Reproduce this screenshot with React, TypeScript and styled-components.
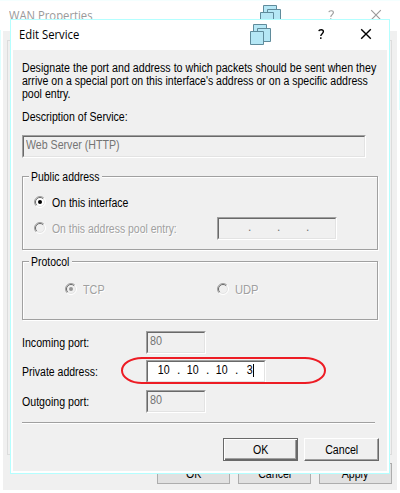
import React from "react";
import styled, { createGlobalStyle } from "styled-components";

const Global = createGlobalStyle`
  * { box-sizing: border-box; }
  body { margin: 0; background: #fff; overflow: hidden; }
`;

const face = "#f0f0f0";

const Desktop = styled.div`
  display: grid;
  width: 400px;
  height: 493px;
  background: linear-gradient(#dff, #dff) 0 30px / 1px 50px no-repeat,
    linear-gradient(#dff, #dff) 399px 80px / 1px 30px no-repeat, #fff;
  font: 12px/13px "Liberation Sans", Arial, sans-serif;
  color: #000;
`;

/* Condensed run of text, narrowed toward its own origin. */
const Narrow = styled.span<{ $x?: number; $origin?: string }>`
  display: inline-block;
  transform: scaleX(${(p) => p.$x ?? 0.885});
  transform-origin: ${(p) => p.$origin ?? "left"} center;
  white-space: nowrap;
`;

const ParentWindow = styled.section`
  grid-area: 1 / 1;
  display: flex;
  flex-direction: column;
  padding: 0 3px 3px;
  border-bottom: 1px solid #e3ffff;
  border-top: 1px solid #f4ffff;
`;

const ParentBody = styled.div`
  height: 459px;
  padding: 9px 5px 0 4px;
  background: ${face};
`;

const TabPane = styled.div`
  height: 415px;
  border: 1px solid #dcdcdc;
  margin-bottom: 8px;
`;

const ButtonRow = styled.div<{ $gap: number }>`
  display: flex;
  justify-content: flex-end;
  gap: ${(p) => p.$gap}px;
`;

const FlatButton = styled.button`
  width: 73px;
  height: 21px;
  padding: 0;
  border: 1px solid #adadad;
  background: #e1e1e1;
  color: #000;
  font: inherit;
  line-height: 20px;
`;

const Dialog = styled.section`
  grid-area: 1 / 1;
  position: relative;
  margin: 19px 0 0 10px;
  width: 380px;
  height: 455px;
  padding: 0 2px 2px;
  border: 1px solid #b4ffff;
  background: #fff;
`;

const TitleBar = styled.header<{ $inactive?: boolean }>`
  display: flex;
  height: 30px;
  padding-left: 6px;
  color: ${(p) => (p.$inactive ? "#999" : "#000")};
  font: 12px/30px "Open Sans", "Noto Sans", sans-serif;
`;

const TitleText = styled.div<{ $w: number }>`
  width: ${(p) => p.$w}px;
  height: 30px;
`;

const Glyph = styled.svg`
  display: block;
  flex: none;
`;

const DialogBody = styled.div`
  height: 421px;
  padding: 12px 8px 0 9px;
  background: ${face};
`;

const Intro = styled.p`
  width: 356px;
  height: 39px;
  margin: 0 0 10px;
`;

const Line = styled(Narrow)`
  display: block;
  width: max-content;
`;

const Caption = styled.div`
  height: 24px;
`;

const Field = styled.div<{ $w: number; $white?: boolean }>`
  flex: none;
  width: ${(p) => p.$w}px;
  height: 23px;
  border: 1px solid;
  border-color: #a0a0a0 #fff #fff #a0a0a0;
  background: ${(p) => (p.$white ? "#fff" : face)};
  color: ${(p) => (p.$white ? "#000" : "#747474")};
`;

const FieldInner = styled.div`
  display: flex;
  height: 21px;
  padding: 2px 2px 0;
  border: 1px solid;
  border-color: #696969 #e3e3e3 #e3e3e3 #696969;
`;

const Octet = styled.span<{ $w: number; $end?: boolean }>`
  display: flex;
  flex: none;
  justify-content: ${(p) => (p.$end ? "flex-end" : "center")};
  width: ${(p) => p.$w}px;
`;

const Dot = styled.span`
  flex: none;
  width: 3px;
`;

const Caret = styled.i`
  flex: none;
  width: 1px;
  height: 13px;
  background: #000;
`;

const Group = styled.fieldset<{ $h: number; $gap: number }>`
  position: relative;
  width: 356px;
  height: ${(p) => p.$h}px;
  margin: 0 0 ${(p) => p.$gap}px;
  padding: 0;
  border: 1px solid #a0a0a0;
  box-shadow: 1px 1px 0 #fff, inset 1px 1px 0 #fff;
`;

const GroupTitle = styled.div<{ $w: number }>`
  position: absolute;
  top: -6px;
  left: 6px;
  width: ${(p) => p.$w}px;
  padding-left: 2px;
  background: ${face};
`;

const OptionRow = styled.div<{ $h: number; $left: number }>`
  display: flex;
  align-items: center;
  height: ${(p) => p.$h}px;
  padding-left: ${(p) => p.$left}px;
`;

const OptionText = styled.span<{ $w: number; $disabled?: boolean }>`
  flex: none;
  width: ${(p) => p.$w}px;
  margin-left: 6px;
  padding-top: 2px;
  color: ${(p) => (p.$disabled ? "#a0a0a0" : "#000")};
  text-shadow: ${(p) => (p.$disabled ? "1px 1px 0 #fff" : "none")};
`;

const Spacer = styled.div<{ $h: number }>`
  height: ${(p) => p.$h}px;
`;

const FormRow = styled.div<{ $h: number }>`
  display: flex;
  height: ${(p) => p.$h}px;
`;

const FormLabel = styled.label`
  width: 124px;
  padding-top: 6px;
`;

const Separator = styled.hr`
  width: 353px;
  height: 2px;
  margin: 3px 0 14px;
  border: 0;
  border-top: 1px solid #a0a0a0;
  border-bottom: 1px solid #fff;
`;

const RaisedButton = styled.button<{ $primary?: boolean }>`
  width: 75px;
  height: 23px;
  padding: 0;
  border: 1px solid;
  border-color: ${(p) => (p.$primary ? "#696969" : "#fff #696969 #696969 #fff")};
  box-shadow: ${(p) =>
    p.$primary
      ? "inset 1px 1px 0 #fff, inset -1px -1px 0 #696969, inset -2px -2px 0 #a0a0a0"
      : "inset -1px -1px 0 #a0a0a0"};
  background: ${face};
  color: #000;
  font: inherit;
  line-height: 18px;
`;

const Highlight = styled.svg`
  position: absolute;
  left: 109px;
  top: 336px;
`;

const WindowControls = ({ stroke, weight }: { stroke: string; weight: number }) => (
  <Glyph width="126" height="30" viewBox="0 0 126 30">
    <g fill="#b5e7f5" stroke="#5f8b9b">
      <path d="M3.5 4.5h13v13h-13z" />
      <path d="M7.5 8.5h13v13h-13z" />
      <path d="M.5 11.5h13v13H.5z" />
    </g>
    <g fill="none" stroke={stroke} strokeWidth={weight}>
      <path d="M68.8 11.2c.2-1 1.2-1.5 2.4-1.5 1.4 0 2.2.7 2.2 1.9 0 2-2.6 2.2-2.6 4.4M70.8 17.3v1.6" />
      <path d="M111.2 9.2l9.6 9.6M120.8 9.2l-9.6 9.6" />
    </g>
  </Glyph>
);

const Radio = ({ checked, disabled }: { checked?: boolean; disabled?: boolean }) => (
  <Glyph width="12" height="12" viewBox="0 0 12 12">
    <circle cx="6" cy="6" r="5" fill={disabled ? face : "#fff"} />
    <g fill="none">
      <path d="M9.9 2.1A5.5 5.5 0 0 0 2.1 9.9" stroke="#a0a0a0" />
      <path d="M9.2 2.8A4.5 4.5 0 0 0 2.8 9.2" stroke="#696969" />
      <path d="M9.2 2.8A4.5 4.5 0 0 1 2.8 9.2" stroke="#e3e3e3" />
      <path d="M9.9 2.1A5.5 5.5 0 0 1 2.1 9.9" stroke="#fff" />
    </g>
    {checked && <circle cx="6" cy="6" r="2" fill={disabled ? "#969696" : "#000"} />}
  </Glyph>
);

const Input = ({ w, white, children }: { w: number; white?: boolean; children?: React.ReactNode }) => (
  <Field $w={w} $white={white}>
    <FieldInner>{children}</FieldInner>
  </Field>
);

export default function App() {
  return (
    <Desktop>
      <Global />
      <ParentWindow>
        <TitleBar $inactive>
          <TitleText $w={251}><Narrow $x={0.94}>WAN Properties</Narrow></TitleText>
          <WindowControls stroke="#999" weight={1.1} />
        </TitleBar>
        <ParentBody>
          <TabPane />
          <ButtonRow $gap={8}>
            <FlatButton><Narrow $origin="center">OK</Narrow></FlatButton>
            <FlatButton><Narrow $origin="center">Cancel</Narrow></FlatButton>
            <FlatButton><Narrow $origin="center">Apply</Narrow></FlatButton>
          </ButtonRow>
        </ParentBody>
      </ParentWindow>

      <Dialog>
        <TitleBar>
          <TitleText $w={231}><Narrow $x={0.94}>Edit Service</Narrow></TitleText>
          <WindowControls stroke="#000" weight={1.4} />
        </TitleBar>
        <DialogBody>
          <Intro>
            <Line $x={0.888}>Designate the port and address to which packets should be sent when they</Line>
            <Line $x={0.878}>arrive on a special port on this interface's address or on a specific address</Line>
            <Line $x={0.88}>pool entry.</Line>
          </Intro>
          <Caption><Narrow $x={0.88}>Description of Service:</Narrow></Caption>
          <Input w={344}><Narrow>Web Server (HTTP)</Narrow></Input>

          <Spacer $h={18} />
          <Group $h={74} $gap={11}>
            <GroupTitle $w={73}><Narrow $x={0.87}>Public address</Narrow></GroupTitle>
            <Spacer $h={12} />
            <OptionRow $h={26} $left={11}>
              <Radio checked />
              <OptionText $w={120}><Narrow $x={0.875}>On this interface</Narrow></OptionText>
            </OptionRow>
            <OptionRow $h={26} $left={11}>
              <Radio disabled />
              <OptionText $w={165} $disabled><Narrow $x={0.87}>On this address pool entry:</Narrow></OptionText>
              <Input w={120}>
                <Octet $w={27} /><Dot>.</Dot><Octet $w={26} /><Dot>.</Dot><Octet $w={26} /><Dot>.</Dot>
              </Input>
            </OptionRow>
          </Group>
          <Group $h={59} $gap={11}>
            <GroupTitle $w={43}><Narrow $x={0.87}>Protocol</Narrow></GroupTitle>
            <Spacer $h={14} />
            <OptionRow $h={26} $left={42}>
              <Radio checked disabled />
              <OptionText $w={134} $disabled><Narrow $x={0.9}>TCP</Narrow></OptionText>
              <Radio disabled />
              <OptionText $w={60} $disabled><Narrow $x={0.93}>UDP</Narrow></OptionText>
            </OptionRow>
          </Group>

          <FormRow $h={29}>
            <FormLabel><Narrow>Incoming port:</Narrow></FormLabel>
            <Input w={60}><Narrow $x={0.9}>80</Narrow></Input>
          </FormRow>
          <FormRow $h={30}>
            <FormLabel><Narrow $x={0.875}>Private address:</Narrow></FormLabel>
            <Input w={120} white>
              <Octet $w={27}><Narrow $origin="center">10</Narrow></Octet><Dot>.</Dot>
              <Octet $w={26}><Narrow $origin="center">10</Narrow></Octet><Dot>.</Dot>
              <Octet $w={26}><Narrow $origin="center">10</Narrow></Octet><Dot>.</Dot>
              <Octet $w={15} $end><Narrow $origin="right">3</Narrow></Octet><Caret />
            </Input>
          </FormRow>
          <FormRow $h={29}>
            <FormLabel><Narrow>Outgoing port:</Narrow></FormLabel>
            <Input w={60}><Narrow $x={0.9}>80</Narrow></Input>
          </FormRow>
          <Separator />
          <ButtonRow $gap={6}>
            <RaisedButton $primary><Narrow $origin="center">OK</Narrow></RaisedButton>
            <RaisedButton><Narrow $origin="center">Cancel</Narrow></RaisedButton>
          </ButtonRow>
        </DialogBody>
        <Highlight width="208" height="30" viewBox="0 0 208 30">
          <rect x="2" y="2" width="203" height="25" rx="20" ry="12.5" fill="none" stroke="#ed1c24" strokeWidth="2" />
        </Highlight>
      </Dialog>
    </Desktop>
  );
}
